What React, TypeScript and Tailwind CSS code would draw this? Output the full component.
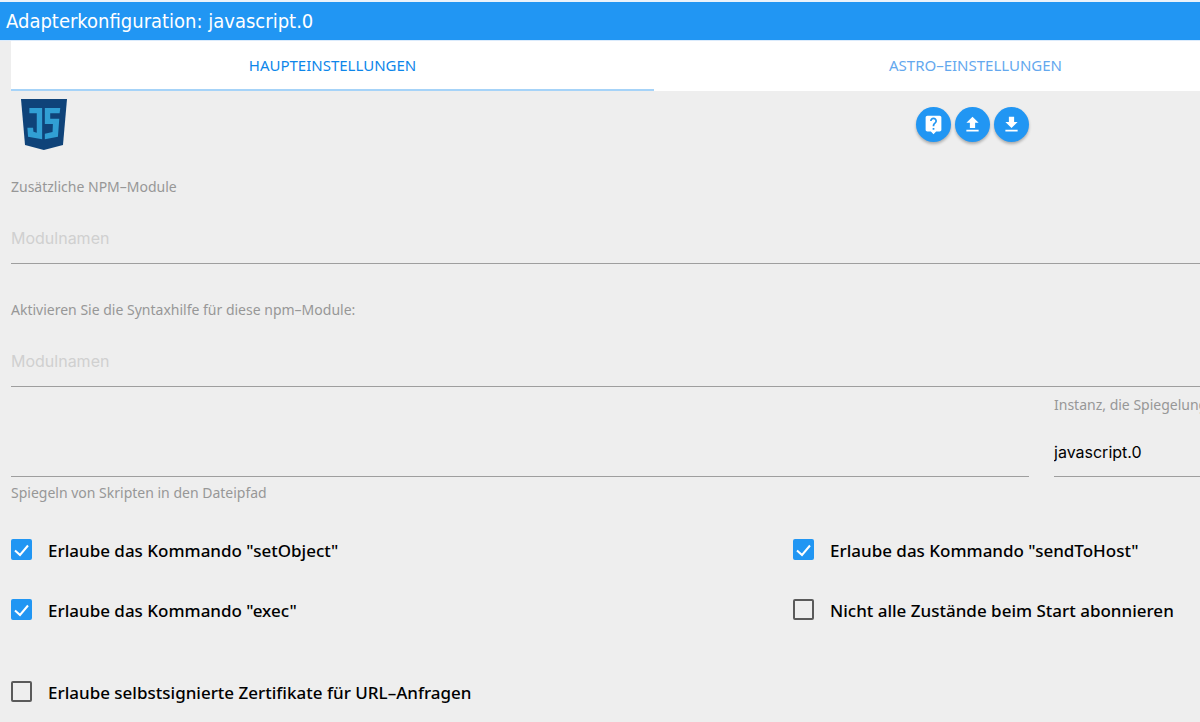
import { ReactNode, useState } from 'react';

const lucida = 'font-["Noto_Sans","Open_Sans",sans-serif]';

function JsLogo() {
  return (
    <svg className="h-[51px] w-[46px]" viewBox="35 28 137 153" preserveAspectRatio="none" role="img" aria-label="JavaScript">
      <path fill="#0f4379" d="M35 28h137l-12 138-57 15-56-15z" />
      <path fill="#319fd4" d="M60 55h38v94l-42-8-2-27h17l1 12 10 3V71H60z" />
      <path fill="#319fd4" d="M106 55h46l-2 16h-28v16h27l-4 54-39 8v-17l23-5 1-24h-24z" />
    </svg>
  );
}

function RoundButton({ label, children }: { label: string; children: ReactNode }) {
  return (
    <button
      type="button"
      aria-label={label}
      className="flex size-[35px] items-center justify-center rounded-full bg-[#2196f3] text-white shadow-[0_2px_3px_rgba(0,0,0,0.28)]"
    >
      <svg className="size-[21px]" viewBox="0 0 24 24" fill="currentColor" aria-hidden="true">
        {children}
      </svg>
    </button>
  );
}

function ModuleField({ id, label }: { id: string; label: string }) {
  return (
    <div className="flex flex-col">
      <label htmlFor={id} className="text-[14px] leading-5 text-[#979797]">
        {label}
      </label>
      <input
        id={id}
        type="text"
        placeholder="Modulnamen"
        className='mt-4 h-[51px] border-b border-[#9e9e9e] bg-transparent font-["Inter",sans-serif] text-[16px] text-black outline-none placeholder:text-[#d0d0d0]'
      />
    </div>
  );
}

function CheckOption({ id, label, initial = false }: { id: string; label: string; initial?: boolean }) {
  const [checked, setChecked] = useState(initial);
  return (
    <div className="flex items-start">
      <span className="relative size-[21px] shrink-0">
        <input
          id={id}
          type="checkbox"
          checked={checked}
          onChange={(e) => setChecked(e.target.checked)}
          className="block size-[21px] appearance-none rounded-[2px] border-2 border-[#5a5a5a] checked:border-[#2196f3] checked:bg-[#2196f3]"
        />
        {checked && (
          <svg className="pointer-events-none absolute inset-0 size-[21px]" viewBox="0 0 21 21" fill="none" aria-hidden="true">
            <path d="M4 11.5l5 4.5 8-9.5" stroke="white" strokeWidth="2" />
          </svg>
        )}
      </span>
      <label htmlFor={id} className="ml-4 text-[17px] leading-6 font-medium text-black">
        {label}
      </label>
    </div>
  );
}

export default function App() {
  const [tab, setTab] = useState(0);
  const tabs = ['HAUPTEINSTELLUNGEN', 'ASTRO–EINSTELLUNGEN'];
  return (
    <div className={`min-h-screen overflow-hidden bg-[#eeeeee] ${lucida}`}>
      <header className="border-t-2 border-b border-t-[#eaf2fa] border-b-[#dbebfc]">
        <h1 className='bg-[#2196f3] px-[6px] font-["DejaVu_Sans_Condensed","DejaVu_Sans",sans-serif] text-[20px] leading-[38px] text-white'>
          Adapterkonfiguration: javascript.0
        </h1>
      </header>

      <div className="ml-[11px] w-[calc(100%+86px)]">
        <nav role="tablist" className="grid grid-cols-2 bg-white">
          {tabs.map((name, i) => (
            <button
              key={name}
              type="button"
              role="tab"
              aria-selected={tab === i}
              onClick={() => setTab(i)}
              className="h-[50px] border-b-2 border-transparent text-[15px] text-[#64a8ee] aria-selected:border-[#a6d3f8] aria-selected:text-[#0d86ea]"
            >
              {name}
            </button>
          ))}
        </nav>

        <main>
          <div className="flex w-[calc(100%-268px)] items-start justify-between">
            <div className="pt-2 pl-[10px]">
              <JsLogo />
            </div>
            <div className="flex gap-1 pt-4">
              <RoundButton label="Hilfe">
                <path d="M19 2H5c-1.1 0-2 .9-2 2v14c0 1.1.9 2 2 2h4l3 3 3-3h4c1.1 0 2-.9 2-2V4c0-1.1-.9-2-2-2zm-6 16h-2v-2h2v2zm2.07-7.75l-.9.92C13.45 11.9 13 12.5 13 14h-2v-.5c0-1.1.45-2.1 1.17-2.83l1.24-1.26c.37-.36.59-.86.59-1.41 0-1.1-.9-2-2-2s-2 .9-2 2H8c0-2.21 1.79-4 4-4s4 1.79 4 4c0 .88-.36 1.68-.93 2.25z" />
              </RoundButton>
              <RoundButton label="Hochladen">
                <path d="M9 16h6v-6h4l-7-7-7 7h4zm-4 2h14v2H5z" />
              </RoundButton>
              <RoundButton label="Herunterladen">
                <path d="M19 9h-4V3H9v6H5l7 7 7-7zM5 18v2h14v-2H5z" />
              </RoundButton>
            </div>
          </div>

          <div className="mt-[27px] flex flex-col gap-9">
            <ModuleField id="npm" label="Zusätzliche NPM–Module" />
            <ModuleField id="syntax" label="Aktivieren Sie die Syntaxhilfe für diese npm–Module:" />
          </div>

          <div className="grid grid-cols-[1fr_243px] gap-x-[25px]">
            <div className="flex flex-col">
              <input id="mirror" type="text" aria-label="Spiegeln von Skripten in den Dateipfad" className="mt-10 h-[50px] border-b border-[#9e9e9e] bg-transparent outline-none" />
              <label htmlFor="mirror" className="mt-[6px] text-[14px] leading-5 text-[#979797]">
                Spiegeln von Skripten in den Dateipfad
              </label>
            </div>
            <div className="flex flex-col">
              <label htmlFor="instance" className="mt-2 text-[14px] leading-5 whitespace-nowrap text-[#979797]">
                Instanz, die Spiegelung
              </label>
              <select
                id="instance"
                className='mt-3 h-[50px] appearance-none border-b border-[#9e9e9e] bg-transparent font-["Inter",sans-serif] text-[16px] text-black outline-none'
              >
                <option>javascript.0</option>
              </select>
            </div>
          </div>

          <div className="mt-9 grid grid-cols-[1fr_504px] gap-y-9">
            <CheckOption id="set-object" label={'Erlaube das Kommando "setObject"'} initial />
            <CheckOption id="send-to-host" label={'Erlaube das Kommando "sendToHost"'} initial />
            <CheckOption id="exec" label={'Erlaube das Kommando "exec"'} initial />
            <CheckOption id="subscribe" label="Nicht alle Zustände beim Start abonnieren" />
          </div>
          <div className="mt-[58px]">
            <CheckOption id="certificates" label="Erlaube selbstsignierte Zertifikate für URL–Anfragen" />
          </div>
        </main>
      </div>
    </div>
  );
}
